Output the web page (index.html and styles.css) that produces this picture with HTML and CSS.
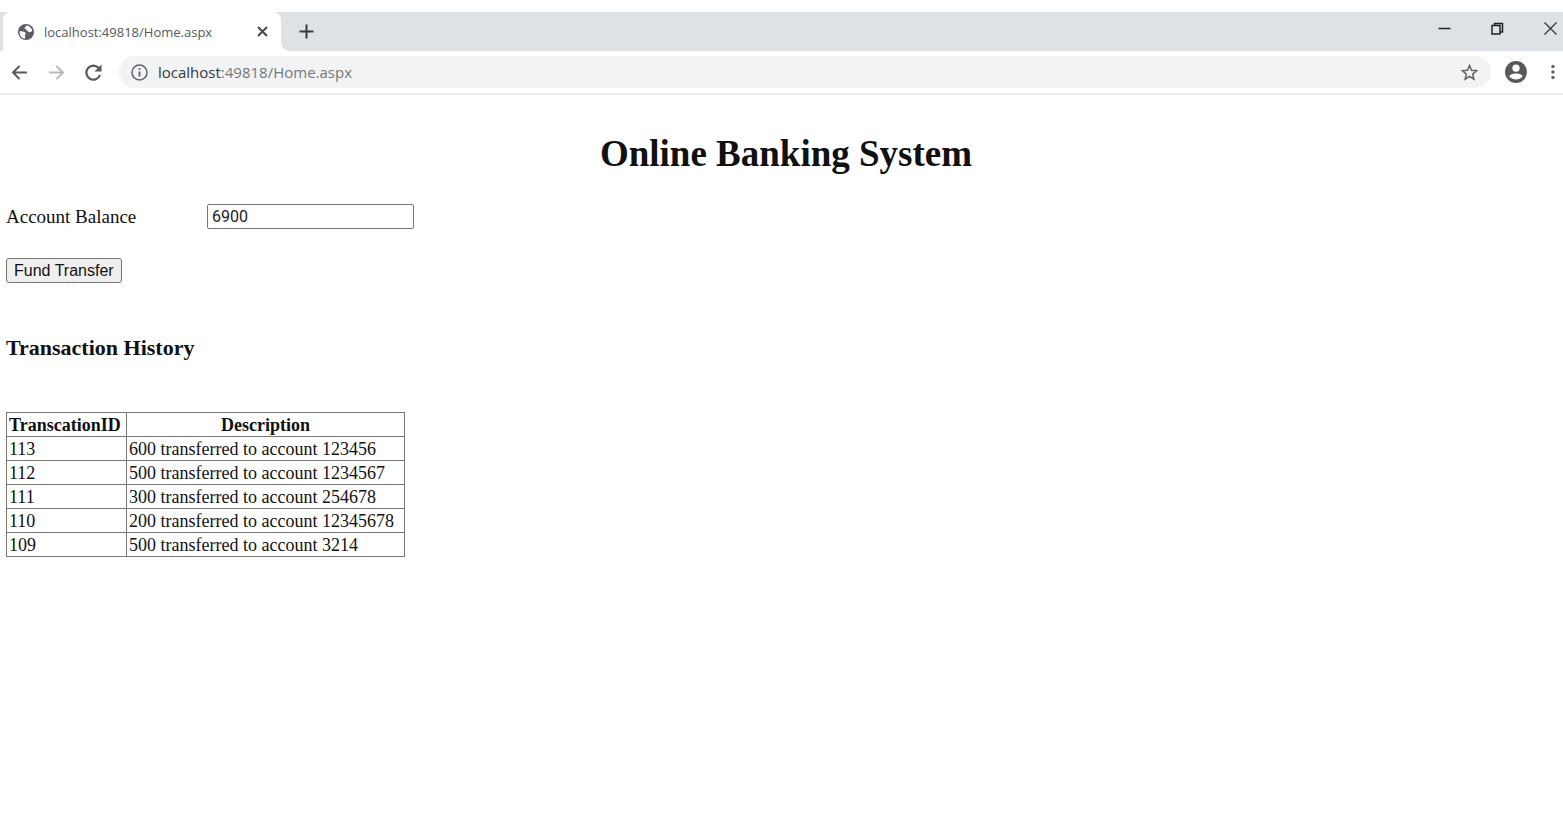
FILE: index.html
```html
<!DOCTYPE html>
<html lang="en">
<head>
<meta charset="utf-8">
<title>localhost:49818/Home.aspx</title>
<link rel="stylesheet" href="styles.css">
</head>
<body>
<header class="browser">
  <div class="tab-strip">
    <div class="tab">
      <svg class="globe" viewBox="0 0 16 16" aria-hidden="true"><circle cx="8" cy="8" r="8" fill="#5a5d61"/><path d="M1.500 7.500 C3 7 5 8 6.500 8 C8 8.500 8 10 7 11 C6.500 12 7.500 13 7 14.500 C4 14.500 1.500 12 1.500 7.500 Z M8 1.500 C11 1.500 13.500 3.500 14.300 6.500 C13.500 8 12 8.500 10.500 8 C10.300 6.500 8.500 7 8 6 C9 5 7 5 6.500 4.500 C6.500 3 8 3 8 1.500 Z" fill="#fff"/></svg>
      <span class="tab-title">localhost:49818/Home.aspx</span>
      <button class="icon-button" aria-label="Close tab"><svg width="11" height="11" viewBox="0 0 11 11"><path d="M1 1 L10 10 M10 1 L1 10" stroke="#45484c" stroke-width="2"/></svg></button>
    </div>
    <button class="icon-button new-tab" aria-label="New tab"><svg width="15" height="15" viewBox="0 0 15 15"><path d="M7.500 0.500 V14.500 M0.500 7.500 H14.500" stroke="#35383c" stroke-width="2"/></svg></button>
    <div class="window-controls">
      <button class="icon-button" aria-label="Minimize"><svg width="13" height="13" viewBox="0 0 13 13"><path d="M0.500 6.500 H12.500" stroke="#222" stroke-width="1.500"/></svg></button>
      <button class="icon-button" aria-label="Restore"><svg width="13" height="13" viewBox="0 0 13 13"><path d="M1 3.500 H9 V12 H1 Z M3.500 3.500 V1.500 H11.500 V10 H9" fill="none" stroke="#222" stroke-width="1.500"/></svg></button>
      <button class="icon-button" aria-label="Close window"><svg width="13" height="13" viewBox="0 0 13 13"><path d="M0.500 0.500 L12.500 12.500 M12.500 0.500 L0.500 12.500" stroke="#333" stroke-width="1.300"/></svg></button>
    </div>
  </div>
  <div class="toolbar">
    <nav class="nav-buttons">
      <button class="icon-button" aria-label="Back"><svg width="17" height="17" viewBox="0 0 17 17"><path d="M16 8.500 H2 M8.500 2 L2 8.500 L8.500 15" fill="none" stroke="#56595d" stroke-width="2"/></svg></button>
      <button class="icon-button" aria-label="Forward"><svg width="17" height="17" viewBox="0 0 17 17"><path d="M1 8.500 H15 M8.500 2 L15 8.500 L8.500 15" fill="none" stroke="#b9bbbe" stroke-width="2"/></svg></button>
      <button class="icon-button" aria-label="Reload"><svg width="17" height="17" viewBox="0 0 17 17"><path d="M14 4.500 A7 7 0 1 0 15 11" fill="none" stroke="#56595d" stroke-width="2.200"/><path d="M16.500 0.500 V7.500 H9.500 Z" fill="#56595d"/></svg></button>
    </nav>
    <div class="omnibox">
      <svg width="17" height="17" viewBox="0 0 17 17" aria-hidden="true"><circle cx="8.500" cy="8.500" r="7.500" fill="none" stroke="#5f6368" stroke-width="1.500"/><path d="M8.500 7.500 V12.500 M8.500 4.300 V6" stroke="#5f6368" stroke-width="1.800"/></svg>
      <span class="url"><span class="host">localhost</span>:49818/Home.aspx</span>
      <button class="icon-button" aria-label="Bookmark this page"><svg width="17" height="17" viewBox="0 0 17 17"><path d="M8.500 1.500 L10.500 6.300 L15.700 6.700 L11.700 10.100 L12.900 15.200 L8.500 12.500 L4.100 15.200 L5.300 10.100 L1.300 6.700 L6.500 6.300 Z" fill="none" stroke="#5f6368" stroke-width="1.500"/></svg></button>
    </div>
    <button class="icon-button" aria-label="Profile"><svg width="22" height="22" viewBox="0 0 22 22"><circle cx="11" cy="11" r="11" fill="#56595e"/><circle cx="11" cy="7.200" r="3.600" fill="#fff"/><path d="M4.300 15.500 C5 11.500 17 11.500 17.700 15.500 C14.500 19.500 7.500 19.500 4.300 15.500 Z" fill="#fff"/></svg></button>
    <button class="icon-button menu" aria-label="Menu"><svg width="4" height="16" viewBox="0 0 4 16"><circle cx="2" cy="2.500" r="1.700" fill="#5f6368"/><circle cx="2" cy="8" r="1.700" fill="#5f6368"/><circle cx="2" cy="13.500" r="1.700" fill="#5f6368"/></svg></button>
  </div>
</header>
<main class="page">
  <h1 class="title">Online Banking System</h1>
  <div class="balance">
    <label class="balance-label" for="balance">Account Balance</label>
    <input class="balance-input" id="balance" type="text" value="6900">
  </div>
  <button class="transfer" type="button">Fund Transfer</button>
  <h2 class="subtitle">Transaction History</h2>
  <table class="history">
    <thead><tr><th class="id-column" scope="col">TranscationID</th><th class="description-column" scope="col">Description</th></tr></thead>
    <tbody>
      <tr><td>113</td><td>600 transferred to account 123456</td></tr>
      <tr><td>112</td><td>500 transferred to account 1234567</td></tr>
      <tr><td>111</td><td>300 transferred to account 254678</td></tr>
      <tr><td>110</td><td>200 transferred to account 12345678</td></tr>
      <tr><td>109</td><td>500 transferred to account 3214</td></tr>
    </tbody>
  </table>
</main>
</body>
</html>
```
FILE: styles.css
```css
* { box-sizing: border-box; }
body {
  margin: 0;
  padding-top: 12px;
  background: #fff;
  color: #111;
  font-family: "Liberation Serif", "Times New Roman", serif;
  font-size: 19px;
  line-height: 22px;
}
.browser {
  font-family: "Open Sans", "Noto Sans", sans-serif;
  border-bottom: 2px solid #eeeeef;
}
.icon-button {
  display: flex;
  padding: 0;
  border: 0;
  background: none;
}
.tab-strip {
  display: flex;
  align-items: stretch;
  height: 39px;
  padding-left: 3px;
  background: #dee1e6;
}
.tab {
  position: relative;
  display: flex;
  align-items: center;
  width: 278px;
  padding: 0 13px 0 15px;
  border-radius: 8px 8px 0 0;
  background: #fff;
}
.tab::after {
  content: "";
  position: absolute;
  left: 100%;
  bottom: 0;
  width: 8px;
  height: 8px;
  background: radial-gradient(circle at 100% 0, transparent 7px, #fff 8px);
}
.globe { width: 16px; height: 16px; margin-right: 10px; }
.tab-title { flex: 1; font-size: 13px; color: #55585c; }
.new-tab { align-items: center; margin-left: 18px; }
.window-controls {
  display: flex;
  align-items: center;
  gap: 40px;
  margin-left: auto;
  padding: 0 6px 6px 0;
}
.toolbar {
  display: flex;
  align-items: center;
  height: 42px;
  padding: 0 8px 0 11px;
}
.nav-buttons { display: flex; gap: 20px; }
.omnibox {
  display: flex;
  flex: 1;
  align-items: center;
  height: 32px;
  margin: 0 14px 0 17px;
  padding: 0 13px 0 12px;
  border-radius: 16px;
  background: #f1f3f4;
}
.url { flex: 1; margin-left: 10px; font-size: 15px; color: #74777b; }
.host { color: #35383c; }
.menu { margin-left: 24px; }
.page { padding: 38px 0 0 6px; }
.title {
  margin: 0 0 29px;
  padding-left: 3px;
  font-size: 37px;
  line-height: 42px;
  text-align: center;
}
.balance { display: flex; align-items: center; }
.balance-label { width: 201px; }
.balance-input {
  width: 207px;
  height: 25px;
  padding: 1px 4px;
  border: 1px solid #767676;
  border-radius: 2px;
  font-family: Roboto, Arial, sans-serif;
  font-size: 16px;
  color: #222;
}
.transfer {
  display: block;
  height: 25px;
  margin: 29px 0 52px;
  padding: 0 7px;
  border: 1px solid #767676;
  border-radius: 3px;
  background: #efefef;
  font-family: "Liberation Sans", Arial, sans-serif;
  font-size: 16px;
  line-height: 22px;
  color: #111;
}
.subtitle {
  margin: 0 0 51px;
  font-size: 22px;
  line-height: 26px;
}
.history {
  border-collapse: collapse;
  font-size: 18px;
}
.history th,
.history td {
  height: 24px;
  padding: 0 2px;
  border: 1px solid #777;
  text-align: left;
}
.history .id-column { width: 120px; }
.history .description-column { width: 278px; text-align: center; }
```
